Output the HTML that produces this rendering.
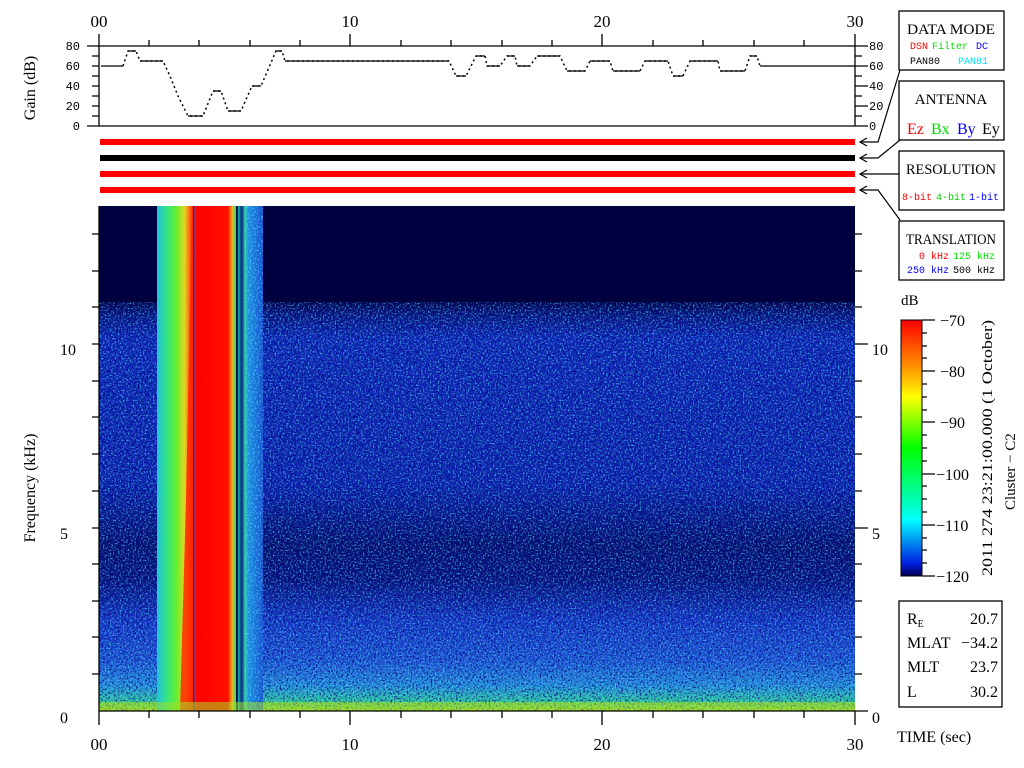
<!DOCTYPE html>
<html><head><meta charset="utf-8"><style>
html,body{margin:0;padding:0;background:#fff;}
svg{display:block}
text{font-family:"Liberation Serif",serif;}
text.m,.m text{font-family:"Liberation Mono",monospace;}
</style></head><body>
<svg width="1024" height="768" viewBox="0 0 1024 768" xmlns="http://www.w3.org/2000/svg">
<defs>
<linearGradient id="bg" x1="0" y1="0" x2="0" y2="1">
<stop offset="0" stop-color="#000040"/>
<stop offset="0.185" stop-color="#000040"/>
<stop offset="0.215" stop-color="#081680"/>
<stop offset="0.26" stop-color="#1028b8"/>
<stop offset="0.55" stop-color="#0e24b0"/>
<stop offset="0.67" stop-color="#061070"/>
<stop offset="0.74" stop-color="#081480"/>
<stop offset="0.82" stop-color="#1838c8"/>
<stop offset="0.9" stop-color="#2058d8"/>
<stop offset="0.95" stop-color="#2890e0"/>
<stop offset="0.98" stop-color="#30c8a0"/>
<stop offset="1" stop-color="#b0e020"/>
</linearGradient>
<linearGradient id="band" x1="0" y1="0" x2="1" y2="0">
<stop offset="0" stop-color="#20c0e0"/>
<stop offset="0.08" stop-color="#30e090"/>
<stop offset="0.18" stop-color="#60f030"/>
<stop offset="0.26" stop-color="#e0d820"/>
<stop offset="0.32" stop-color="#ff5010"/>
<stop offset="0.36" stop-color="#ff0000"/>
<stop offset="0.67" stop-color="#ff1000"/>
<stop offset="0.71" stop-color="#f0b020"/>
<stop offset="0.74" stop-color="#40e060"/>
<stop offset="0.76" stop-color="#20d0a0"/>
<stop offset="0.8" stop-color="#102090"/>
<stop offset="0.83" stop-color="#30d0a0"/>
<stop offset="0.86" stop-color="#2090e0"/>
<stop offset="1" stop-color="#1850d0"/>
</linearGradient>
<linearGradient id="cb" x1="0" y1="0" x2="0" y2="1">
<stop offset="0" stop-color="#ff0000"/>
<stop offset="0.2" stop-color="#ffa000"/>
<stop offset="0.3" stop-color="#ffff00"/>
<stop offset="0.5" stop-color="#00ff00"/>
<stop offset="0.7" stop-color="#00ffb0"/>
<stop offset="0.78" stop-color="#00ffff"/>
<stop offset="0.95" stop-color="#0020e0"/>
<stop offset="1" stop-color="#000050"/>
</linearGradient>
<filter id="nz" x="0" y="0" width="100%" height="100%">
<feTurbulence type="fractalNoise" baseFrequency="0.6" numOctaves="1" seed="3"/>
<feColorMatrix type="matrix" values="0 0 0 0 0.1  0 0 0 0 0.85  0 0 0 0 1  4 0 0 0 -2"/>
</filter>
<filter id="nd" x="0" y="0" width="100%" height="100%">
<feTurbulence type="fractalNoise" baseFrequency="0.55" numOctaves="1" seed="9"/>
<feColorMatrix type="matrix" values="0 0 0 0 0  0 0 0 0 0  0 0 0 0 0.2  4 0 0 0 -1.9"/>
</filter>
</defs>

<g font-size="17" text-anchor="middle">
<text x="99" y="27">00</text><text x="350" y="27">10</text><text x="602" y="27">20</text><text x="855" y="27">30</text>
<text x="99" y="750">00</text><text x="350" y="750">10</text><text x="602" y="750">20</text><text x="855" y="750">30</text>
</g>

<g stroke="#000" stroke-width="1.3" fill="none">
<line x1="87" y1="46" x2="855" y2="46"/>
<line x1="87" y1="126" x2="855" y2="126"/>
<line x1="99" y1="34" x2="99" y2="126"/>
<line x1="855" y1="34" x2="855" y2="126"/>
<path d="M149 40V46M199 40V46M250 40V46M300 40V46M350 34V46M401 40V46M451 40V46M502 40V46M552 40V46M602 34V46M653 40V46M703 40V46M754 40V46M804 40V46"/>
<path d="M92 56H99M92 66H99M92 76H99M92 86H99M92 96H99M92 106H99M92 116H99M855 46H868M855 56H862M855 66H868M855 76H862M855 86H868M855 96H862M855 106H868M855 116H862M855 126H868"/>
<polyline stroke-width="1.5" stroke-dasharray="2 3" points="123,66 128,51 136,51 140,61 163,61 170,76 178,96 188,116 203,116 213,91 221,91 228,111 241,111 252,86 261,86 276,51 282,51 285,61 449,61 456,76 466,76 476,56 485,56 487,66 500,66 507,56 515,56 517,66 530,66 537,56 560,56 567,71 585,71 590,61 610,61 613,71 640,71 645,61 668,61 673,76 683,76 690,61 718,61 720,71 745,71 750,56 757,56 760,66"/>
<path stroke-width="1.3" d="M101 66H123M128 51H136M140 61H163M188 116H203M213 91H221M228 111H241M252 86H261M276 51H282M285 61H449M456 76H466M476 56H485M487 66H500M507 56H515M517 66H530M537 56H560M567 71H585M590 61H610M613 71H640M645 61H668M673 76H683M690 61H718M720 71H745M750 56H757M760 66H855"/>
</g>
<g class="m" font-size="12" text-anchor="end">
<text x="80" y="50">80</text><text x="80" y="70">60</text><text x="80" y="90">40</text><text x="80" y="110">20</text><text x="80" y="130">0</text>
</g>
<g class="m" font-size="12">
<text x="869" y="50">80</text><text x="869" y="70">60</text><text x="869" y="90">40</text><text x="869" y="110">20</text><text x="869" y="130">0</text>
</g>
<text x="35" y="88" font-size="16" transform="rotate(-90 35 88)" text-anchor="middle">Gain (dB)</text>

<rect x="100" y="139" width="755" height="6" fill="#ff0000"/>
<rect x="100" y="155" width="755" height="6" fill="#000"/>
<rect x="100" y="171" width="755" height="6" fill="#ff0000"/>
<rect x="100" y="187" width="755" height="6" fill="#ff0000"/>
<g stroke="#000" stroke-width="1.2" fill="none">
<path d="M860 142H878L900 70"/><path d="M867 138L860 142L867 146"/>
<path d="M860 158H878L900 140"/><path d="M867 154L860 158L867 162"/>
<path d="M860 174H899"/><path d="M867 170L860 174L867 178"/>
<path d="M860 190H878L900 220"/><path d="M867 186L860 190L867 194"/>
</g>

<g fill="#fff" stroke="#000" stroke-width="1.3">
<rect x="899" y="11" width="105" height="59"/>
<rect x="899" y="81" width="105" height="59"/>
<rect x="899" y="151" width="105" height="59"/>
<rect x="899" y="221" width="105" height="59"/>
<rect x="899" y="601" width="103" height="106"/>
</g>
<g font-size="15" text-anchor="middle">
<text x="951" y="34" textLength="88" lengthAdjust="spacingAndGlyphs">DATA MODE</text>
<text x="951" y="104">ANTENNA</text>
<text x="951" y="174" textLength="90" lengthAdjust="spacingAndGlyphs">RESOLUTION</text>
<text x="951" y="244" textLength="90" lengthAdjust="spacingAndGlyphs">TRANSLATION</text>
</g>
<g class="m" font-size="10">
<text x="910" y="49" fill="#ff0000">DSN</text><text x="932" y="49" fill="#00dd00">Filter</text><text x="976" y="49" fill="#0000ff">DC</text>
<text x="910" y="64" fill="#000">PAN80</text><text x="958" y="64" fill="#00e0ff">PAN81</text>
<text x="902" y="200" fill="#ff0000">8-bit</text><text x="936" y="200" fill="#00cc00">4-bit</text><text x="969" y="200" fill="#0000ff">1-bit</text>
<text x="919" y="259" fill="#ff0000">0 kHz</text><text x="953" y="259" fill="#00dd00">125 kHz</text>
<text x="907" y="273" fill="#0000ff">250 kHz</text><text x="953" y="273" fill="#000">500 kHz</text>
</g>
<g font-size="16">
<text x="907" y="134" fill="#ff0000">Ez</text><text x="931" y="134" fill="#00dd00">Bx</text><text x="957" y="134" fill="#0000ff">By</text><text x="982" y="134" fill="#000">Ey</text>
</g>

<rect x="99" y="206" width="756" height="505" fill="url(#bg)"/>
<rect x="99" y="300" width="756" height="411" filter="url(#nd)" opacity="0.8"/>
<rect x="99" y="300" width="756" height="411" filter="url(#nz)" opacity="0.6"/>
<rect x="99" y="206" width="58" height="96" fill="#000040"/>
<rect x="263" y="206" width="592" height="96" fill="#000040"/>
<rect x="157" y="206" width="106" height="505" fill="url(#band)"/>
<rect x="245" y="206" width="18" height="505" filter="url(#nz)" opacity="0.6"/>
<path d="M180 711 L186 500 L190 300 L192 206 L196 206 L196 711Z" fill="#ff2000" opacity="0.8"/>
<rect x="193" y="206" width="1.5" height="505" fill="#1030c0"/>
<rect x="236" y="206" width="2" height="505" fill="#001060"/>
<rect x="99" y="702" width="756" height="9" fill="#a0e020" opacity="0.55"/>

<g stroke="#000" stroke-width="1.3" fill="none">
<line x1="99" y1="206" x2="99" y2="711"/>
<line x1="99" y1="711" x2="855" y2="711"/>
<path d="M92 674H99M92 637H99M92 601H99M92 564H99M92 528H99M92 491H99M92 454H99M92 417H99M92 381H99M92 344H99M92 307H99M92 271H99M92 234H99"/>
<path d="M855 711H868M855 674H862M855 637H862M855 601H862M855 564H862M855 528H868M855 491H862M855 454H862M855 417H862M855 381H862M855 344H868M855 307H862M855 271H862M855 234H862"/>
<path d="M99 711V725M149 711V718M199 711V718M250 711V718M300 711V718M350 711V725M401 711V718M451 711V718M502 711V718M552 711V718M602 711V725M653 711V718M703 711V718M754 711V718M804 711V718M855 711V725"/>
</g>
<g font-size="16">
<text x="68" y="723" text-anchor="end">0</text><text x="68" y="539" text-anchor="end">5</text><text x="76" y="355" text-anchor="end">10</text>
<text x="872" y="723">0</text><text x="872" y="539">5</text><text x="872" y="355">10</text>
</g>
<text x="35" y="488" font-size="16" transform="rotate(-90 35 488)" text-anchor="middle">Frequency (kHz)</text>

<text x="901" y="305" font-size="15">dB</text>
<rect x="901" y="320" width="21" height="256" fill="url(#cb)" stroke="#000" stroke-width="1"/>
<g stroke="#000" stroke-width="1.2">
<path d="M922 320H935M922 333H927M922 346H927M922 358H927M922 371H935M922 384H927M922 397H927M922 410H927M922 422H935M922 435H927M922 448H927M922 461H927M922 474H935M922 486H927M922 499H927M922 512H927M922 525H935M922 538H927M922 550H927M922 563H927M922 576H935"/>
</g>
<g font-size="16">
<text x="940" y="326">−70</text><text x="940" y="377">−80</text><text x="940" y="428">−90</text>
<text x="936" y="480">−100</text><text x="936" y="531">−110</text><text x="936" y="582">−120</text>
</g>
<text x="992" y="576" font-size="15" transform="rotate(-90 992 576)" textLength="256" lengthAdjust="spacingAndGlyphs">2011 274 23:21:00.000 (1 October)</text>
<text x="1015" y="510" font-size="15" transform="rotate(-90 1015 510)">Cluster − C2</text>

<g font-size="16">
<text x="907" y="624">R<tspan font-size="10" dy="3">E</tspan></text><text x="998" y="624" text-anchor="end">20.7</text>
<text x="907" y="648">MLAT</text><text x="998" y="648" text-anchor="end">−34.2</text>
<text x="907" y="672">MLT</text><text x="998" y="672" text-anchor="end">23.7</text>
<text x="907" y="697">L</text><text x="998" y="697" text-anchor="end">30.2</text>
<text x="897" y="742">TIME (sec)</text>
</g>
</svg>
</body></html>
